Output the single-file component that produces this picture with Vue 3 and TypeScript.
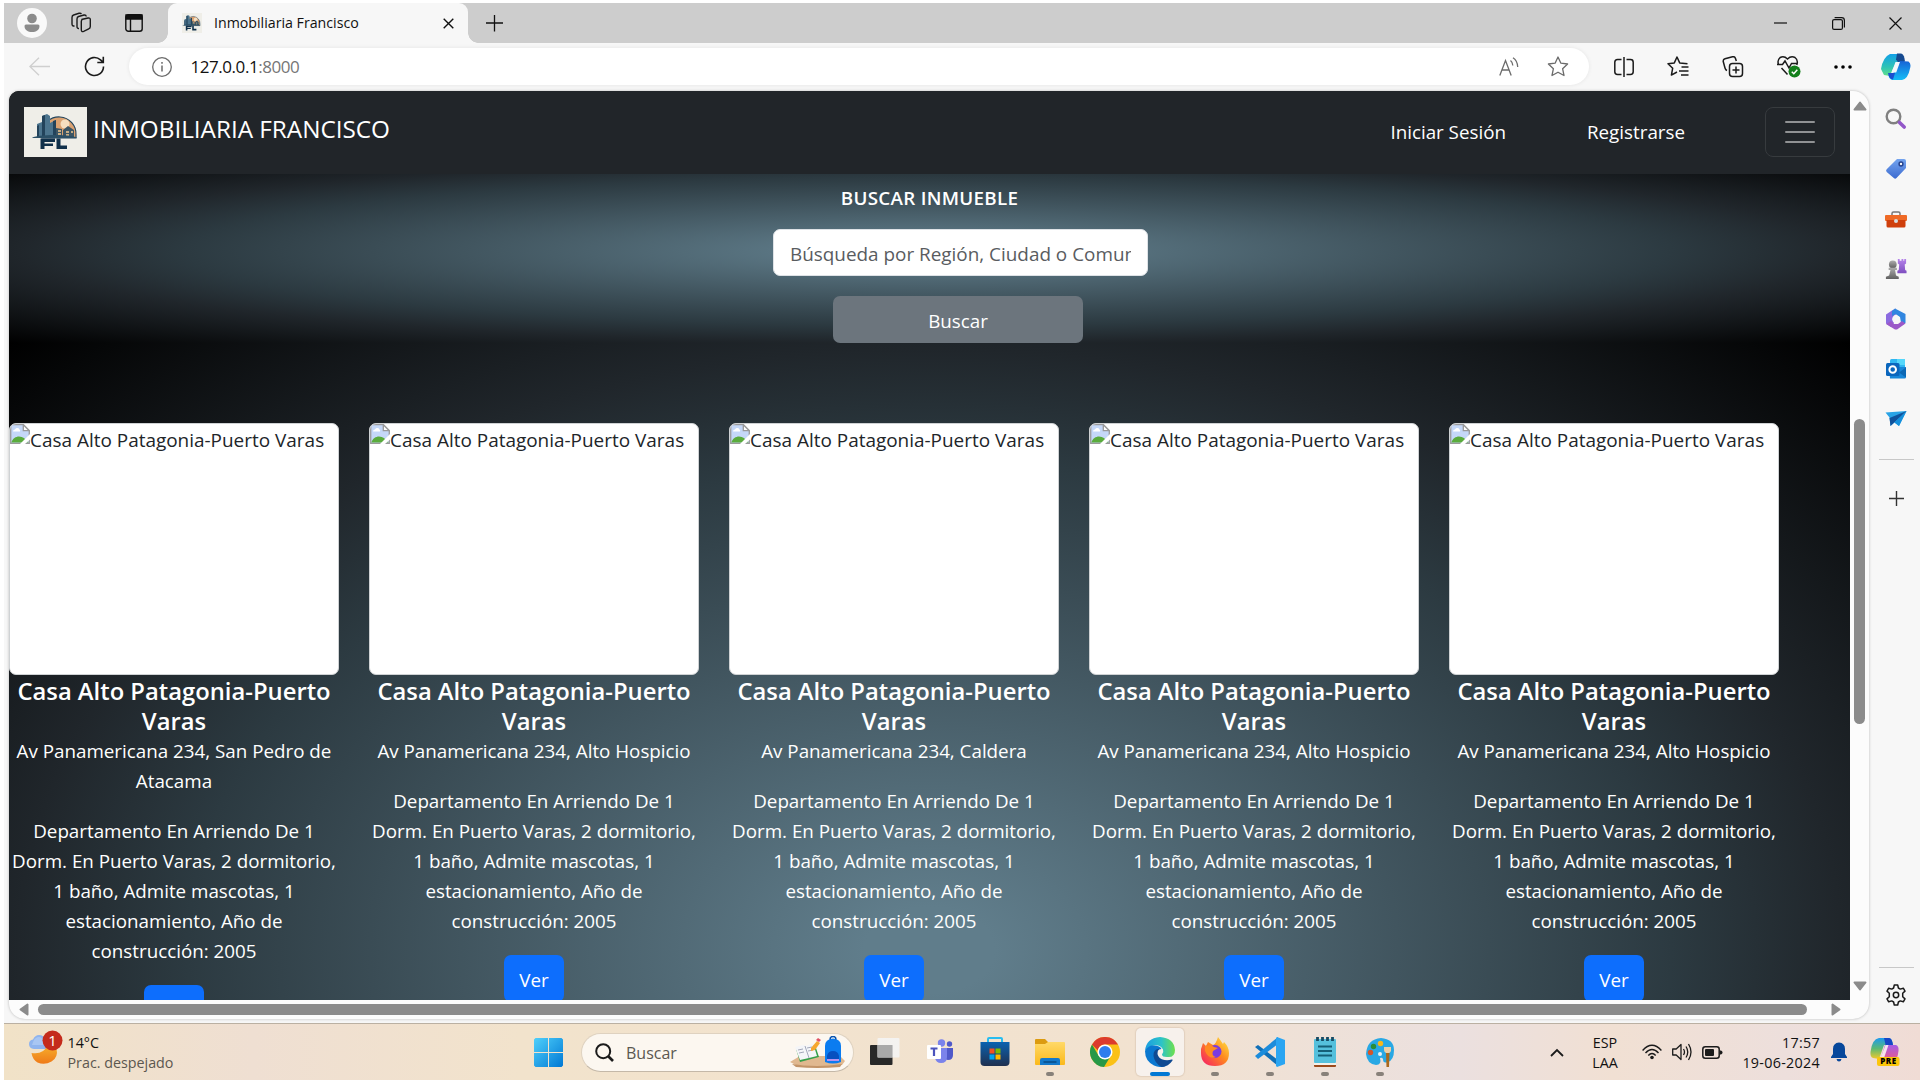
<script setup lang="ts">
interface Card {
  address: string
}

const title = 'Casa Alto Patagonia-Puerto Varas'
const description =
  'Departamento En Arriendo De 1\nDorm. En Puerto Varas, 2 dormitorio,\n1 baño, Admite mascotas, 1\nestacionamiento, Año de\nconstrucción: 2005'

const cards: Card[] = [
  { address: 'Av Panamericana 234, San Pedro de\nAtacama' },
  { address: 'Av Panamericana 234, Alto Hospicio' },
  { address: 'Av Panamericana 234, Caldera' },
  { address: 'Av Panamericana 234, Alto Hospicio' },
  { address: 'Av Panamericana 234, Alto Hospicio' },
]
</script>

<template>
  <div class="screen">
    <svg width="0" height="0" class="defs">
      <defs>
        <linearGradient id="gBlue" x1="0" y1="0" x2="1" y2="1"><stop offset="0" stop-color="#4fd0fb" /><stop offset="1" stop-color="#0078d4" /></linearGradient>
        <linearGradient id="gWave" x1="0" y1="0" x2="1" y2="0"><stop offset="0" stop-color="#1b9de2" /><stop offset=".55" stop-color="#2cc3c8" /><stop offset="1" stop-color="#6fe04b" /></linearGradient>
        <linearGradient id="gCop" x1="0" y1="0" x2="0" y2="1"><stop offset="0" stop-color="#12a0e8" /><stop offset=".6" stop-color="#2fc4b4" /><stop offset="1" stop-color="#63e08a" /></linearGradient>
        <linearGradient id="gCop2" x1="0" y1="0" x2="0" y2="1"><stop offset="0" stop-color="#1663d6" /><stop offset="1" stop-color="#14bdf7" /></linearGradient>
        <linearGradient id="gPre" x1="0" y1="0" x2="0" y2="1"><stop offset="0" stop-color="#1d9af0" /><stop offset=".5" stop-color="#5bb974" /><stop offset="1" stop-color="#f3c92a" /></linearGradient>
        <linearGradient id="gPre2" x1="0" y1="0" x2="0" y2="1"><stop offset="0" stop-color="#a45ce6" /><stop offset="1" stop-color="#ee5a84" /></linearGradient>
        <linearGradient id="gMoon" x1="0" y1="0" x2="0" y2="1"><stop offset="0" stop-color="#f6b02c" /><stop offset="1" stop-color="#ef7a18" /></linearGradient>
        <linearGradient id="gFox" x1="1" y1="0" x2="0" y2="1"><stop offset="0" stop-color="#fff04a" /><stop offset=".45" stop-color="#ff8a1e" /><stop offset="1" stop-color="#f5156c" /></linearGradient>
        <linearGradient id="gStore" x1="0" y1="0" x2="0" y2="1"><stop offset="0" stop-color="#0a62b0" /><stop offset="1" stop-color="#20304f" /></linearGradient>
        <linearGradient id="gFold" x1="0" y1="0" x2="0" y2="1"><stop offset="0" stop-color="#ffd968" /><stop offset="1" stop-color="#fbb91b" /></linearGradient>
        <linearGradient id="gTag" x1="0" y1="0" x2="0" y2="1"><stop offset="0" stop-color="#74a4ef" /><stop offset="1" stop-color="#3c6bd0" /></linearGradient>
        <linearGradient id="gRook" x1="0" y1="0" x2="0" y2="1"><stop offset="0" stop-color="#b583ea" /><stop offset="1" stop-color="#7f4fc0" /></linearGradient>
        <linearGradient id="gPawn" x1="0" y1="0" x2="0" y2="1"><stop offset="0" stop-color="#adadad" /><stop offset="1" stop-color="#606060" /></linearGradient>
      </defs>
      <symbol id="logo" viewBox="0 0 63 50">
        <rect width="63" height="50" fill="#efeee8" />
        <path d="M18 26a17 17 0 0 1 34 2v3H18z" fill="#dba271" stroke="#24455c" stroke-width="1.2" />
        <circle cx="41" cy="17" r="4.500" fill="#f6dfc0" />
        <path d="M13 31V17l5-2v16zM18 31V9l5-2 3 2v22zM26 31V16l6-3v18z" fill="#4c748d" />
        <path d="M18 31V9l3-1v23zM29 31V14l3-1v18zM13 31V19l2-1v13z" fill="#23435b" />
        <path d="M32 31V21l6 1v9zM39 31v-8l5-4 6 4v8z" fill="#3c5564" />
        <path d="M34 24h3M34 27h3M42 25h3M42 28h3M47 25h2" stroke="#f4c98e" stroke-width="1.400" />
        <path d="M8 31c3-4 43-4 45 0z" fill="#2b4f66" />
        <path d="M16.500 31.500H31V35H20.500v1.500H29V39h-8.500v3h-4zM32.500 31.500h4V38.500H43V42H32.500z" fill="#10304a" />
      </symbol>
      <symbol id="broken" viewBox="0 0 20 20">
        <path d="M.7.7h12.600l6 6v12.600H.7z" fill="#c5d8f8" stroke="#9a9a9a" stroke-width="1.300" />
        <path d="M13.300.7v6h6z" fill="#fff" stroke="#9a9a9a" stroke-width="1.300" />
        <path d="M3 7.500a2 2 0 0 1 2-2 2.500 2.500 0 0 1 4.500 0 1.500 1.500 0 0 1 .5 2z" fill="#fff" />
        <path d="M1.400 18.600c1-4 4.500-6 7.600-6 4 0 6 2 9.600 6z" fill="#5aac3c" />
        <path d="M10 20 20 10v5.500L15 20z" fill="#fff" />
      </symbol>
    </svg>

    <div class="browser">
      <header class="tabbar">
        <div class="tab-left">
          <svg class="avatar" width="30" height="30" viewBox="0 0 30 30"><circle cx="15" cy="15" r="15" fill="#f9f9f9" /><circle cx="15" cy="10.500" r="4.800" fill="#8c8c8c" /><path d="M9 16.500h12q1.500 0 1.500 1.500c0 4-3.500 6-7.500 6s-7.500-2-7.500-6q0-1.500 1.500-1.500z" fill="#8c8c8c" /></svg>
          <svg width="22" height="22" viewBox="0 0 22 22" fill="none" stroke="#1b1b1b" stroke-width="1.400"><path d="M11.500 7.500 18 6q2.300-.4 2.300 1.600v7q0 1.800-1.600 2.300l-5 2.500q-2.400.9-2.400-1.600V9.500q0-1.600 1.200-2z" /><path d="M9 16.500q-2 .2-2-2V7q0-2 1.600-2.500l5.400-1.500q2-.3 2.300 1.500" /><path d="M4.500 14q-2.500.2-2.500-2V5.500q0-2 1.600-2.500L9 1.300q2-.3 2.300.8" /></svg>
          <svg width="18" height="18" viewBox="0 0 18 18" fill="none" stroke="#111" stroke-width="1.400"><rect x=".8" y=".8" width="16.400" height="16.400" rx="2.500" /><path d="M1 1h16v4H1z" fill="#111" /><path d="M5.500 5v12" /></svg>
        </div>
        <div class="tab">
          <svg class="favicon" viewBox="7 2 50 46" preserveAspectRatio="none"><use href="#logo" width="63" height="50" /></svg>
          <span class="tab-title">Inmobiliaria Francisco</span>
          <svg class="tab-close" width="11" height="11" viewBox="0 0 11 11"><path d="m.7.7 9.600 9.600M10.300.7.7 10.300" stroke="#111" stroke-width="1.400" /></svg>
        </div>
        <svg class="new-tab" width="17" height="17" viewBox="0 0 17 17"><path d="M8.500 0v17M0 8.500h17" stroke="#111" stroke-width="1.300" /></svg>
        <div class="window-buttons">
          <svg width="13" height="13" viewBox="0 0 13 13"><path d="M0 6h13" stroke="#111" stroke-width="1.200" /></svg>
          <svg width="13" height="13" viewBox="0 0 13 13" fill="none" stroke="#111" stroke-width="1.200"><rect x=".6" y="2.600" width="9.800" height="9.800" rx="1.500" /><path d="M2.600.6h7q2.800 0 2.800 2.800v7" /></svg>
          <svg width="13" height="13" viewBox="0 0 13 13"><path d="m.5.500 12 12M12.500.5l-12 12" stroke="#111" stroke-width="1.200" /></svg>
        </div>
      </header>

      <div class="toolbar">
        <svg class="back" width="21" height="19" viewBox="0 0 21 19" fill="none" stroke="#cfcfcf" stroke-width="1.400"><path d="M10 .8.9 9.500l9.100 8.700M1 9.500h20" /></svg>
        <svg class="reload" width="21" height="21" viewBox="0 0 21 21" fill="none" stroke="#1b1b1b" stroke-width="1.600"><path d="M19.500 10.500a9 9 0 1 1-3-6.700l2.500 2.400M19.300.8v5.700h-6" /></svg>
        <div class="address">
          <svg width="20" height="20" viewBox="0 0 20 20" fill="none" stroke="#6b6b6b" stroke-width="1.300"><circle cx="10" cy="10" r="9.300" /><path d="M10 8.500v6M10 5v1.800" stroke-width="1.500" /></svg>
          <span class="url">127.0.0.1<i>:8000</i></span>
          <svg class="read" width="20" height="20" viewBox="0 0 20 20" fill="none" stroke="#6b6b6b" stroke-width="1.300"><path d="M.8 18.500 6.500 3.500l5.700 15M3 13h7M11.500 3.500q2 1.500 2.300 5M14 .8q4.500 3 4.700 9.200" /></svg>
          <svg class="star" width="22" height="21" viewBox="0 0 22 21" fill="none" stroke="#6b6b6b" stroke-width="1.300" stroke-linejoin="round"><path d="m11 1 2.900 6.200 6.700.8-5 4.700 1.400 6.800L11 16.200l-6 3.300 1.400-6.800-5-4.700 6.700-.8z" /></svg>
        </div>
        <div class="tools">
          <svg width="20" height="20" viewBox="0 0 20 20" fill="none" stroke="#1b1b1b" stroke-width="1.500"><path d="M7.500 2.500h-4q-2.700 0-2.700 2.700v9.600q0 2.700 2.700 2.700h4M12.500 2.500h4q2.700 0 2.700 2.700v9.600q0 2.700-2.700 2.700h-4M10 0v20" /></svg>
          <svg width="22" height="21" viewBox="0 0 22 21" fill="none" stroke="#1b1b1b" stroke-width="1.500" stroke-linejoin="round"><path d="M20.500 7.800 12.700 6.900 10 1 7.300 6.900 1 7.700l4.700 4.500-1.300 6.900L10 16M14.500 11h7M12 15h9.500M14 19h7.500" /></svg>
          <svg width="22" height="22" viewBox="0 0 22 22" fill="none" stroke="#1b1b1b" stroke-width="1.500"><rect x="7.500" y="7.500" width="13" height="13" rx="3" /><path d="M14 10.500v7M10.500 14h7M5 14.500q-1.500-.5-2-2.500L1.300 5.800Q.8 3.500 3 2.800l7.500-2q2.300-.6 3 1.700l.8 2.500" /></svg>
          <svg width="24" height="23" viewBox="0 0 24 23" fill="none" stroke="#1b1b1b" stroke-width="1.500"><path d="M1.500 9.500Q0 5 3.200 2.500 7 .5 10.500 4 14 .5 18 2.500q3.500 2.500 1.800 7.500M0 9.500h5.500L8 6l4 7 2.500-4.500H20M4.500 13l6 6.500" /><circle cx="17.500" cy="16.500" r="6" fill="#13801b" stroke="none" /><path d="m14.800 16.700 2 2 3.500-4" stroke="#fff" /></svg>
          <svg width="18" height="4" viewBox="0 0 18 4"><circle cx="2" cy="2" r="1.800" /><circle cx="9" cy="2" r="1.800" /><circle cx="16" cy="2" r="1.800" /></svg>
          <svg class="copilot" width="30" height="28" viewBox="0 0 30 28"><path d="M9 1h10l3 2 1 7h-8l-4 8-2 5-6-1-3-6Q2 4 9 1z" fill="url(#gCop)" /><path d="M16 .5h3.500q3 0 4 5l.5 3-6 2-3-4z" fill="#16498f" /><path d="M21 27H11q-3-1-3.500-5l4-1 4-6 3-7 9 .5q3 2 1.500 7Q27 26 21 27z" fill="url(#gCop2)" /><path d="M7 20h7l-2 6.500Q8 26 7 20z" fill="#1b4fd0" /><path d="m14.500 9-4 10.500h4.700L19 9z" fill="#f2f8fb" /></svg>
        </div>
      </div>

      <div class="workspace">
        <main class="frame">
          <div class="upper">
            <div class="page">
              <nav class="navbar">
                <svg class="logo" width="63" height="50"><use href="#logo" width="63" height="50" /></svg>
                <span class="brand">INMOBILIARIA FRANCISCO</span>
                <a class="login">Iniciar Sesión</a>
                <a class="register">Registrarse</a>
                <button class="toggler"><span></span><span></span><span></span></button>
              </nav>
              <section class="search-band">
                <h1>BUSCAR INMUEBLE</h1>
                <div class="field"><span>Búsqueda por Región, Ciudad o Comuna</span></div>
                <button class="search-btn">Buscar</button>
              </section>
              <section class="listing">
                <article v-for="(card, i) in cards" :key="i" class="card">
                  <div class="thumb"><svg width="20" height="20"><use href="#broken" width="20" height="20" /></svg><span>{{ title }}</span></div>
                  <h2>Casa Alto Patagonia-Puerto<br />Varas</h2>
                  <p>{{ card.address }}</p>
                  <p>{{ description }}</p>
                  <a class="view">Ver</a>
                </article>
              </section>
            </div>
            <div class="vscroll">
              <svg width="14" height="10" viewBox="0 0 14 10"><path d="M7 1.500 12.500 8.500h-11z" fill="#8b8b8b" stroke="#8b8b8b" stroke-width="2" stroke-linejoin="round" /></svg>
              <div class="vthumb"></div>
              <svg class="down" width="14" height="10" viewBox="0 0 14 10"><path d="M7 8.500 12.500 1.500h-11z" fill="#8b8b8b" stroke="#8b8b8b" stroke-width="2" stroke-linejoin="round" /></svg>
            </div>
          </div>
          <div class="hscroll">
            <svg width="10" height="13" viewBox="0 0 10 13"><path d="M1.500 6.500 8.500 1.500v10z" fill="#8b8b8b" stroke="#8b8b8b" stroke-width="2" stroke-linejoin="round" /></svg>
            <div class="hthumb"></div>
            <svg width="10" height="13" viewBox="0 0 10 13"><path d="M8.500 6.500 1.500 1.500v10z" fill="#8b8b8b" stroke="#8b8b8b" stroke-width="2" stroke-linejoin="round" /></svg>
          </div>
        </main>

        <aside class="sidebar">
          <svg class="find" width="22" height="22" viewBox="0 0 22 22"><circle cx="8.500" cy="8.500" r="6.800" fill="none" stroke="#808080" stroke-width="2.400" /><path d="m14.500 14.500 4.700 4.500" stroke="#9257c8" stroke-width="3.600" stroke-linecap="round" /></svg>
          <svg width="22" height="22" viewBox="0 0 22 22"><path d="M12 1h7q2 0 2 2v7l-9.500 10q-1.300 1.300-2.700 0L1.700 14q-1.300-1.500 0-2.800z" fill="url(#gTag)" /><circle cx="16" cy="6" r="1.900" fill="#fff" stroke="#28448e" stroke-width="1.500" /></svg>
          <svg width="22" height="22" viewBox="0 0 22 22"><path d="M7 8V5.500q0-1.500 1.500-1.500h5q1.500 0 1.500 1.500V8" fill="none" stroke="#777" stroke-width="1.500" /><rect x="0" y="7" width="22" height="6" rx="1" fill="#ef6a26" /><path d="M1.500 12h19v6q0 1.500-1.500 1.500H3q-1.500 0-1.500-1.500z" fill="#cf3f0c" /><circle cx="11" cy="13" r="2" fill="#d6dde0" /></svg>
          <svg width="22" height="22" viewBox="0 0 22 24"><path d="M13 1h2v2h2V1h2v2h1V1h2v5l-1.500 1 .5 6 1.500 1v2.500H12.500V14l1.500-1 .5-6L13 6z" fill="url(#gRook)" /><circle cx="7.500" cy="7" r="4.200" fill="url(#gPawn)" /><path d="M3 10.500h9V13h-2l1 6 3 1.500V23H0v-2.500L3.500 19l1.500-6H3z" fill="url(#gPawn)" /></svg>
          <svg width="22" height="22" viewBox="0 0 22 22"><path d="M11 .5 7 2.500 1 6.500v9l5 3.500 3-4-1.500-4L9 7.500l2-1z" fill="#8b6be0" /><path d="m10 .5 10.500 5.500V15l-4 2.500L15 9l-4.500-3-3.500 2L7 3z" fill="#3186e0" /><path d="m6 13 3 3h4l4-3 3.500 2.500L12 21.500h-2L1 16z" fill="#9b59c8" /><circle cx="11" cy="11.300" r="3.700" fill="#f7f7f7" /></svg>
          <svg width="22" height="22" viewBox="0 0 22 22"><rect x="5" y="1" width="15" height="11" rx="1.500" fill="#2fb7f2" /><path d="M12 1h8v6h-8z" fill="#55d7fb" /><path d="M4 9h17v10q0 1.500-1.500 1.500H5z" fill="#1786d8" /><path d="m21 9.500-7 5 7 5z" fill="#0c68b4" /><rect x="1" y="5" width="13.500" height="13" rx="1.500" fill="#0a66bd" /><circle cx="7.700" cy="11.500" r="3.300" fill="none" stroke="#fff" stroke-width="2" /></svg>
          <svg width="22" height="22" viewBox="0 0 22 22"><path d="M.5 4.500 21.500 3 14 18l-4.500-3.500L5.500 18 4.500 9.500z" fill="#29a3e6" /><path d="M21.500 3 4.500 10l1 8z" fill="#10529c" /><path d="m21.500 3-12 11.500L14 18z" fill="#1590dc" /></svg>
          <hr />
          <svg class="add" width="15" height="15" viewBox="0 0 15 15"><path d="M7.500 0v15M0 7.500h15" stroke="#333" stroke-width="1.400" /></svg>
          <hr class="low" />
          <svg class="gear" width="22" height="22" viewBox="0 0 22 22" fill="none" stroke="#1b1b1b" stroke-width="1.500" stroke-linejoin="round"><path d="M9.300 1h3.400l.7 3 1.900 1.100 3-.9 1.700 2.900L17.700 9.300v3.400l2.300 2.200-1.700 2.900-3-.9-1.900 1.100-.7 3H9.300l-.7-3-1.900-1.100-3 .9L2 14.900l2.300-2.200V9.300L2 7.100l1.700-2.900 3 .9L8.600 4z" /><circle cx="11" cy="11" r="2.700" /></svg>
        </aside>
      </div>
    </div>

    <footer class="taskbar">
      <div class="weather">
        <svg width="36" height="38" viewBox="0 0 36 38"><path d="M6 19q-5-.5-5-5 0-4 4-4.500Q7 5 11 5q5 0 6 5l2 9z" fill="#8fb4ee" /><path d="M5 12q2-5 6-5 3 0 5 4v4H4z" fill="#b9d2f7" opacity=".6" /><path d="M3.500 23q12 2 16-8l9 3.500q2 9-5 13t-14 1q-5-3-6-9.500z" fill="url(#gMoon)" /><circle cx="24.500" cy="10.500" r="10" fill="#c42b1c" /><text x="24.500" y="16" fill="#fff" font-size="15" font-family="Open Sans" text-anchor="middle">1</text></svg>
        <div class="weather-text"><span>14°C</span><span class="dim">Prac. despejado</span></div>
      </div>
      <svg class="start" width="29" height="29" viewBox="0 0 29 29"><path d="M1.500 0H14v14H0V1.500zM15 0h12.500L29 1.500V14H15zM0 15h14v14H1.500L0 27.500zM15 15h14v12.500L27.500 29H15z" fill="url(#gBlue)" /></svg>
      <div class="task-search">
        <svg width="19" height="19" viewBox="0 0 19 19" fill="none" stroke="#1b1b1b" stroke-width="2"><circle cx="8.200" cy="8.200" r="7" /><path d="m13 13 5 5" stroke-width="2.600" /></svg>
        <span>Buscar</span>
        <svg class="art" width="58" height="33" viewBox="0 0 58 33"><path d="M2 26 12 20h40l5 5-3 4q-23 3-46 0z" fill="#e0b88f" /><path d="M4 28q25 4 50 0l-2 3q-23 2-44 0z" fill="#c39468" /><path d="m8 13 19-4 4 12-19 5z" fill="#35a04a" /><path d="m7 11 8-2 3 1 7-3 4 13-8 2-9 2z" fill="#f4f5f8" /><path d="m17 10 4 12M10 14l5-1M11 17l5-1M19 12l5-1M20 15l5-1" stroke="#a3a8ba" fill="none" /><path d="m23 12 6-7 3 2-5 7-4 1z" fill="#f6a72e" /><path d="m28 4 2-2 3 2-2 2z" fill="#e05263" /><path d="M37 26V10q0-7 8-7.500 8 .5 8 7.500v16q-8 3-16 0z" fill="#0b7cf0" /><path d="M42 3.500q0-3 3-3t3 3" fill="none" stroke="#0753b0" stroke-width="1.500" /><path d="M39 24v-4q1-5 6-5t6 5v4z" fill="#0750c0" /><path d="M39 24h12" stroke="#b592f0" stroke-width="2" /></svg>
      </div>
      <div class="apps">
        <div class="app"><svg width="30" height="30" viewBox="0 0 30 30"><rect x="0" y="8" width="22.500" height="20" rx="1" fill="#282828" /><rect x="7.500" y="1" width="22" height="19.500" rx="1" fill="#f4f4f4" opacity=".9" /><rect x="7.500" y="8" width="15" height="12.500" fill="#a9a9a9" /></svg></div>
        <div class="app"><svg width="30" height="30" viewBox="0 0 30 30"><circle cx="16.500" cy="6" r="3.700" fill="#7b83eb" /><circle cx="24.500" cy="7" r="2.700" fill="#5059c9" /><path d="M20 11h8v7q0 5-5 5-3 0-3-3z" fill="#5059c9" /><path d="M10 11h12v9q0 6-6 6-5 0-6-5z" fill="#7b83eb" /><rect x="2" y="8" width="14" height="14" rx="1" fill="#fff" /><path d="M5.500 11.500h7M9 11.500V19" stroke="#4b53bc" stroke-width="2.200" /></svg></div>
        <div class="app"><svg width="30" height="30" viewBox="0 0 30 30"><path d="M8 5V2q0-1 1-1h12q1 0 1 1v3" fill="none" stroke="#28bdf0" stroke-width="2" /><path d="M.5 5h29v20q0 4-4 4h-21q-4 0-4-4z" fill="url(#gStore)" /><path d="M9.500 11.500h5v5h-5z" fill="#f25022" /><path d="M15.500 11.500h5v5h-5z" fill="#7fba00" /><path d="M9.500 17.500h5v5h-5z" fill="#00a4ef" /><path d="M15.500 17.500h5v5h-5z" fill="#ffb900" /></svg></div>
        <div class="app"><svg width="30" height="30" viewBox="0 0 30 30"><path d="M0 3q0-1 1-1h9l3 3h10v4H0z" fill="#dc9b10" /><path d="M0 7h10l3-2h16q1 0 1 1v21q0 1-1 1H1q-1 0-1-1z" fill="url(#gFold)" /><path d="M5 28v-5q0-2 2-2h16q2 0 2 2v5z" fill="#1378ca" /><path d="M8.500 25h13" stroke="#084e8c" stroke-width="1.600" /></svg><i class="dot"></i></div>
        <div class="app"><svg width="30" height="30" viewBox="0 0 30 30"><circle cx="15" cy="15" r="15" fill="#fbc116" /><path d="M2 7.500A15 15 0 0 1 28 7.500H15q-6 0-7 6z" fill="#dc3b2d" /><path d="M2 7.500A15 15 0 0 0 14 30l7-11.500-6 4-6.500-4z" fill="#279847" /><circle cx="15" cy="15" r="7.500" fill="#fff" /><circle cx="15" cy="15" r="6" fill="#2f7ded" /></svg></div>
        <div class="app active"><svg width="30" height="30" viewBox="0 0 30 30"><path d="M0 14Q1 1 15 0q14 1 15 13 0 8-8 7-5 0-5-2.500 2-2 1-5-3-5-9-4-6 1-9 5.500z" fill="url(#gWave)" /><path d="M0 14Q3 8 9 8.500q6 0 7.500 3.500-5 0-5 6 1 7 8.500 11.500-5 1.500-11-1Q0 24 0 14z" fill="#0b78d0" /><path d="M14.500 11.500Q8 12 8.500 19q1 7 8 11 7-.5 11-6.500.5-1.500-1-1-3 1-7 .5-6-1-7-6-.3-3.500 2-5.500z" fill="#104a92" /></svg><i class="bar"></i></div>
        <div class="app"><svg width="30" height="30" viewBox="0 0 30 30"><path d="M1 12 3 6l3 3 2-4 5 3q3-1 5-8 3 4 5 7l1-2q5 5 5 11 0 13-14 13T1 16z" fill="url(#gFox)" /><circle cx="15" cy="14.500" r="6.500" fill="#7a3be0" /><path d="M5 9q6-2 9 1l4 1-5 3q-2 5 3 6-7 3-11-6z" fill="#ff8a22" /></svg><i class="dot"></i></div>
        <div class="app"><svg width="30" height="30" viewBox="0 0 30 30"><path d="M0 10 3 8l20 15v6z" fill="#1070b8" /><path d="m0 19 3 3L23 7V0z" fill="#1c8cdb" /><path d="m22 0 8 3v24l-8 3-1-1V1z" fill="#2aa5f2" /></svg><i class="dot"></i></div>
        <div class="app"><svg width="30" height="30" viewBox="0 0 30 30"><path d="M4 26h22v3q0 1-1 1H5q-1 0-1-1z" fill="#9c4a1b" /><rect x="4" y="25" width="22" height="3" fill="#f4f1ea" /><rect x="4" y="2" width="22" height="24" rx="1" fill="#55c0dc" /><path d="M8 9.500h14M8 14h14M8 18.500h14" stroke="#155f77" stroke-width="2" /><path d="M7.500 0v4M12.500 0v4M17.500 0v4M22.500 0v4" stroke="#174b63" stroke-width="2.800" /></svg><i class="dot"></i></div>
        <div class="app"><svg width="30" height="30" viewBox="0 0 30 30"><path d="M16 1q13 1 13 12 0 10-6 12-5 2-5-3-1-2-3-1 2 7-4 7-9-1-10-11Q2 2 16 1z" fill="#29a8e4" /><circle cx="15.500" cy="6.500" r="2.700" fill="#f8b81b" /><circle cx="8.500" cy="9.500" r="2.700" fill="#2b8d37" /><circle cx="5.500" cy="15.500" r="2.700" fill="#d4552b" /><circle cx="15" cy="17" r="2" fill="#e9f2f5" /><path d="M19 10h7v4q-1 2-2 2h-3q-2-1-2-3z" fill="#edcfa6" /><path d="M21 16h3.500l-.5 14h-2.500z" fill="#a9691e" /></svg><i class="dot"></i></div>
      </div>
      <div class="tray">
        <svg class="chev" width="14" height="9" viewBox="0 0 14 9"><path d="m1 8 6-6 6 6" fill="none" stroke="#1b1b1b" stroke-width="1.800" /></svg>
        <div class="lang"><span>ESP</span><span>LAA</span></div>
        <svg class="wifi" width="20" height="16" viewBox="0 0 20 16" fill="none" stroke="#1b1b1b" stroke-width="1.400"><path d="M.6 6.500q9.400-10.500 18.800 0M3.500 9q6.500-7 13 0M6.300 11.500q3.700-4 7.400 0" /><circle cx="10" cy="13.500" r="1.800" fill="#1b1b1b" stroke="none" /></svg>
        <svg class="vol" width="20" height="18" viewBox="0 0 20 18" fill="none" stroke="#1b1b1b" stroke-width="1.300" stroke-linejoin="round"><path d="M.7 6h3.500L9 1.500v15L4.200 12H.7zM11.500 6q2 3 0 6M14 3.500q3.500 5.500 0 11M16.500 1q5 8 0 16" /></svg>
        <svg class="bat" width="21" height="13" viewBox="0 0 21 13"><rect x=".8" y=".8" width="16.400" height="11.400" rx="2.500" fill="none" stroke="#1b1b1b" stroke-width="1.500" /><rect x="3" y="3" width="9" height="7" rx="1" fill="#1b1b1b" /><path d="M18 4.500h1q1.500.3 1.500 2T19 8.500h-1z" fill="#1b1b1b" /></svg>
        <div class="clock"><span>17:57</span><span>19-06-2024</span></div>
        <svg class="bell" width="16" height="20" viewBox="0 0 16 20"><path d="M8 .5Q14 1 14 7v5l2 3v1H0v-1l2-3V7Q2 1 8 .5zM5.500 17h5Q10 19.500 8 19.500T5.500 17z" fill="#07479b" /></svg>
        <svg class="pre" width="30" height="30" viewBox="0 0 30 30"><path d="M9 1h10q3 0 4 7h-9l-5 14-6-1q-3-1-2.500-6Q2 2 9 1z" fill="url(#gPre)" /><path d="M14 1h5q3 0 4 7l-7 2z" fill="#1746c6" /><path d="M15 8h11q3 1 2.500 6-1 8-4 10H10z" fill="url(#gPre2)" /><path d="m15.500 8-5 13h3.500l4.500-13z" fill="#f7e3ef" /><rect x="7" y="20" width="22.500" height="9" rx="2" fill="#fcc60b" /><text x="18.500" y="27.400" font-size="8" font-weight="800" letter-spacing=".6" text-anchor="middle" font-family="Open Sans">PRE</text></svg>
      </div>
    </footer>
  </div>
</template>

<style>
body {
  overflow: hidden;
  background: #fff;
}
</style>

<style scoped>
* {
  box-sizing: border-box;
}
.screen {
  width: 1920px;
  height: 1080px;
  padding: 3px 0 0 4px;
  display: flex;
  flex-direction: column;
  font-family: "Open Sans", "Noto Sans", sans-serif;
  color: #111;
  overflow: hidden;
}
.defs {
  position: absolute;
}
svg {
  display: block;
  flex: none;
}
.browser {
  height: 1020px;
  flex: none;
  display: flex;
  flex-direction: column;
  background: #f7f7f7;
}
.tabbar {
  height: 40px;
  flex: none;
  display: flex;
  align-items: center;
  background: #cdcdcd;
}
.tab-left {
  width: 164px;
  height: 40px;
  display: flex;
  align-items: center;
  padding-left: 13px;
  background: radial-gradient(circle at 0 0, transparent 9.5px, #f7f7f7 10px) right bottom / 10px 10px no-repeat;
}
.tab-left svg:nth-child(2) {
  margin-left: 23px;
}
.tab-left svg:nth-child(3) {
  margin-left: 33px;
}
.tab {
  width: 300px;
  height: 40px;
  display: flex;
  align-items: center;
  padding-left: 14px;
  background: #f7f7f7;
  border-radius: 9px 9px 0 0;
}
.favicon {
  width: 20px;
  height: 20px;
}
.tab-title {
  width: 224px;
  margin-left: 12px;
  padding-bottom: 2px;
  font-size: 14.200px;
}
.tab-close {
  margin-left: 5px;
}
.tab + .new-tab {
  box-sizing: content-box;
  padding: 11.500px 0 11.500px 18px;
  background: radial-gradient(circle at 100% 0, transparent 9.5px, #f7f7f7 10px) left bottom / 10px 10px no-repeat;
}
.window-buttons {
  margin-left: auto;
  margin-right: 18px;
  display: flex;
  gap: 44.500px;
}
.toolbar {
  height: 48px;
  flex: none;
  display: flex;
  align-items: center;
  padding: 0 0 1px 24.500px;
}
.reload {
  margin-left: 34px;
}
.address {
  width: 1460px;
  height: 37px;
  margin-left: 24.500px;
  padding: 0 20px 0 22.500px;
  display: flex;
  align-items: center;
  background: #fff;
  border-radius: 19px;
  box-shadow: 0 0 4px rgba(0, 0, 0, 0.08);
}
.url {
  margin-left: 19px;
  font-size: 17px;
  letter-spacing: -0.45px;
}
.url i {
  font-style: normal;
  color: #767676;
}
.read {
  margin-left: auto;
}
.star {
  margin-left: 28px;
}
.tools {
  flex: 1;
  display: flex;
  align-items: center;
  gap: 33px;
  padding-left: 24.500px;
}
.copilot {
  margin-left: -4px;
}
.workspace {
  flex: 1;
  display: flex;
}
.frame {
  width: 1860px;
  height: 928px;
  margin-left: 5px;
  border-radius: 10px 16px 16px 16px;
  overflow: hidden;
  background: #fcfcfc;
  box-shadow: 0 0 3px rgba(0, 0, 0, 0.25);
}
.upper {
  display: flex;
  height: 909px;
}
.page {
  width: 1841px;
  height: 909px;
  overflow: hidden;
  background: #000;
  color: #fff;
  display: flex;
  flex-direction: column;
}
.navbar {
  height: 83px;
  flex: none;
  display: flex;
  align-items: center;
  padding: 0 15px 1px;
  background: #212529;
  font-size: 18.800px;
}
.brand {
  margin: -8px 0 0 6px;
  font-size: 24.300px;
  letter-spacing: -0.020px;
}
.login {
  margin-left: auto;
}
.register {
  margin: 0 80px 0 81px;
}
.toggler {
  width: 70px;
  height: 50px;
  display: flex;
  flex-direction: column;
  align-items: center;
  justify-content: center;
  gap: 7.500px;
  background: none;
  border: 1px solid #373b3e;
  border-radius: 8px;
}
.toggler span {
  width: 30px;
  height: 2.500px;
  border-radius: 1px;
  background: #909294;
  flex: none;
}
.search-band {
  height: 169px;
  flex: none;
  display: flex;
  flex-direction: column;
  align-items: center;
  background: radial-gradient(#607d8b 5%, #2c3a41 57%, #20262b 70%, #000) center bottom / 100% 184px no-repeat;
}
h1 {
  margin: 9px 0 0;
  font-size: 18.800px;
  line-height: 30px;
  font-weight: 600;
  letter-spacing: 0.3px;
}
.field {
  width: 375px;
  height: 47px;
  margin-top: 16px;
  margin-left: 62px;
  padding: 0 16px;
  background: #fff;
  border: 1px solid #dee2e6;
  border-radius: 7px;
  line-height: 48px;
  font-size: 18.900px;
  color: #595c5f;
}
.field span {
  display: block;
  overflow: hidden;
  white-space: nowrap;
}
.search-btn {
  width: 250px;
  height: 47px;
  margin-top: 20px;
  margin-left: 57px;
  padding: 2px 0 0;
  border: 0;
  border-radius: 7px;
  background: #6c757d;
  color: #fff;
  font: 18.800px "Open Sans", sans-serif;
}
.listing {
  height: 1214px;
  flex: none;
  display: flex;
  gap: 30px;
  padding-top: 80px;
  background: radial-gradient(#607d8b 5%, #2c3a41 57%, #20262b 70%, #000);
}
.card {
  width: 330px;
  flex: none;
  text-align: center;
  display: flex;
  flex-direction: column;
  align-items: center;
}
.thumb {
  width: 330px;
  height: 252px;
  display: flex;
  padding: 0;
  border: 1px solid #cfd2d4;
  border-radius: 7px;
  background: #fff;
  color: #212529;
  font-size: 18.950px;
  line-height: 32px;
  overflow: hidden;
  white-space: nowrap;
}
h2 {
  margin: 1px 0 0;
  font-size: 23.800px;
  line-height: 30px;
  font-weight: 600;
  white-space: nowrap;
}
p {
  margin: 0 0 20px;
  font-size: 18.800px;
  line-height: 30px;
  white-space: pre;
}
.view {
  width: 60px;
  height: 47px;
  margin-top: -1px;
  border-radius: 7px;
  background: #0d6efd;
  font-size: 18.800px;
  line-height: 50px;
}
.vscroll {
  width: 19px;
  display: flex;
  flex-direction: column;
  align-items: center;
  padding-top: 10px;
}
.vthumb {
  width: 11px;
  height: 305px;
  margin-top: 308px;
  border-radius: 6px;
  background: #8b8b8b;
}
.down {
  margin-top: 257px;
}
.hscroll {
  height: 19px;
  display: flex;
  align-items: center;
  padding-left: 10px;
}
.hthumb {
  width: 1769px;
  height: 11px;
  margin: 0 24px 0 9px;
  border-radius: 6px;
  background: #8b8b8b;
}
.sidebar {
  flex: 1;
  display: flex;
  flex-direction: column;
  align-items: center;
  padding: 17px 0 0 3px;
  gap: 28px;
}
.sidebar hr {
  width: 35px;
  height: 1px;
  margin: 1px 0 0;
  border: 0;
  background: #c8c8c8;
}
.sidebar .add {
  margin-top: 3px;
}
.sidebar .low {
  margin-top: auto;
}
.gear {
  margin: -12px 0 17px;
}
.taskbar {
  height: 57px;
  flex: none;
  display: flex;
  align-items: center;
  border-top: 1px solid #bab0a2;
  background: linear-gradient(90deg, #f1e2c7 0, #efdfd2 13%, #f2e3cc 27%, #f2e2d0 60%, #ebe0df 76%, #f1e0d3 84%, #eddfdc 93%, #f0dcd5);
  font-size: 14.300px;
  line-height: 20px;
}
.weather {
  width: 530px;
  display: flex;
  align-items: center;
  padding-left: 24px;
}
.weather svg {
  margin-top: -7px;
}
.weather-text,
.lang,
.clock {
  display: flex;
  flex-direction: column;
  padding-top: 2px;
}
.weather-text {
  margin-left: 3.500px;
}
.weather-text .dim {
  color: #5c574f;
}
.task-search {
  width: 273px;
  height: 39px;
  margin-left: 18px;
  padding: 0 7px 0 13px;
  display: flex;
  align-items: center;
  border: 1px solid #dfd2c0;
  border-bottom-color: #c4b8a8;
  border-radius: 20px;
  background: #fcf7f0;
}
.task-search span {
  margin-left: 12px;
  padding-top: 2px;
  font-size: 16px;
  color: #5b5751;
}
.task-search .art {
  margin-left: auto;
}
.apps {
  display: flex;
  gap: 7px;
  margin-left: 7px;
}
.app {
  position: relative;
  width: 48px;
  height: 48px;
  display: flex;
  align-items: center;
  justify-content: center;
  border-radius: 5px;
}
.active {
  background: #f7f1ec;
  box-shadow: 0 0 1px 1px rgba(120, 90, 70, 0.13);
}
.dot,
.bar {
  position: absolute;
  bottom: 0;
  left: 20px;
  width: 8px;
  height: 4px;
  border-radius: 2px;
  background: #88817a;
}
.bar {
  left: 14px;
  width: 20px;
  background: #0078d4;
}
.tray {
  flex: 1;
  display: flex;
  align-items: center;
}
.chev {
  margin-left: 146px;
}
.lang {
  width: 30px;
  margin-left: 26px;
  align-items: center;
}
.wifi {
  margin-left: 22px;
}
.vol,
.bat {
  margin-left: 10px;
}
.clock {
  width: 90px;
  margin-left: 7px;
  align-items: flex-end;
  letter-spacing: 0.300px;
}
.bell {
  margin-left: 11px;
}
.pre {
  margin-left: 23px;
}
</style>
